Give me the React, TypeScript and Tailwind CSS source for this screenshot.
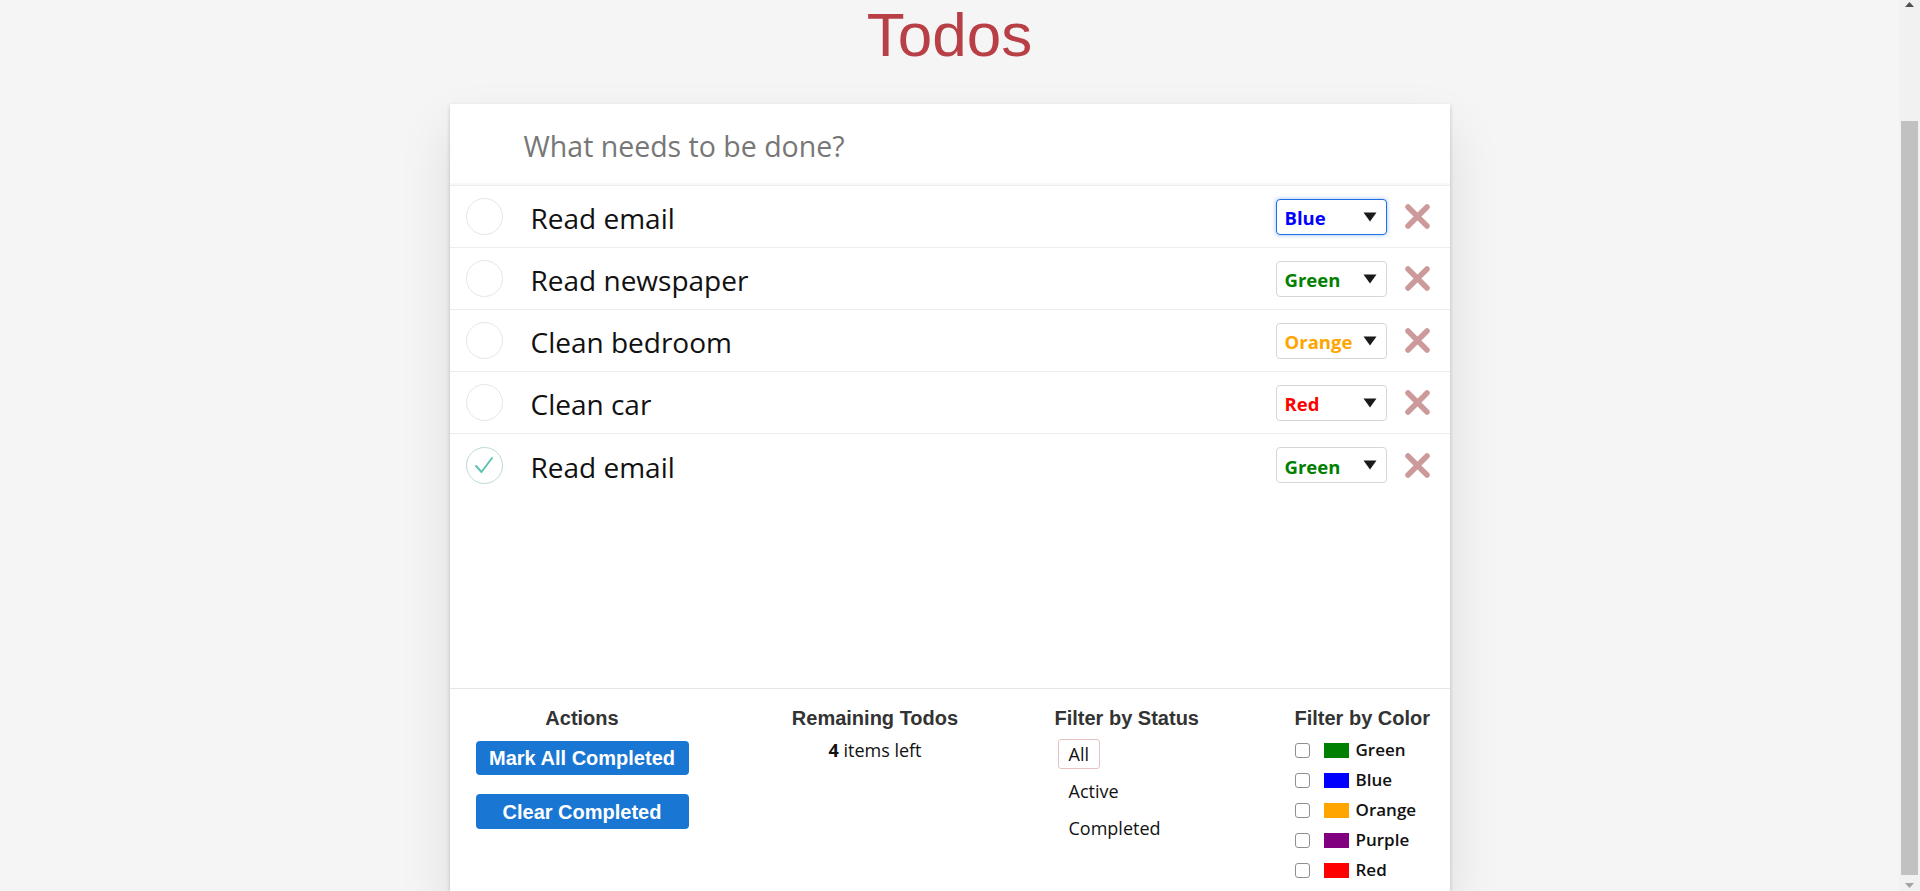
import React from "react";

type Todo = { text: string; color: string; label: string; done: boolean; focused?: boolean };

const todos: Todo[] = [
  { text: "Read email", color: "text-[#0000ff]", label: "Blue", done: false, focused: true },
  { text: "Read newspaper", color: "text-[#008000]", label: "Green", done: false },
  { text: "Clean bedroom", color: "text-[#ffa500]", label: "Orange", done: false },
  { text: "Clean car", color: "text-[#ff0000]", label: "Red", done: false },
  { text: "Read email", color: "text-[#008000]", label: "Green", done: true },
];

const colors = [
  { name: "Green", sw: "bg-[#008000]" },
  { name: "Blue", sw: "bg-[#0000ff]" },
  { name: "Orange", sw: "bg-[#ffa500]" },
  { name: "Purple", sw: "bg-[#800080]" },
  { name: "Red", sw: "bg-[#ff0000]" },
];

const sans = "font-['Open_Sans',sans-serif]";
const arial = "font-['Liberation_Sans',Arial,sans-serif]";

function Circle({ done }: { done: boolean }) {
  return done ? (
    <div className="w-[37px] h-[37px] rounded-full border border-[#bddad5] flex items-center justify-center shrink-0">
      <svg width="22" height="22" viewBox="0 0 22 22">
        <path d="M3 12 L8.5 18 L19 4" fill="none" stroke="#5dc2af" strokeWidth="2" strokeLinecap="round" strokeLinejoin="round" />
      </svg>
    </div>
  ) : (
    <div className="w-[37px] h-[37px] rounded-full border border-[#e6e6e6] shrink-0" />
  );
}

function Row({ t, last }: { t: Todo; last: boolean }) {
  return (
    <div className={`h-[62px] flex items-center pl-[16px] pr-[19px] ${last ? "" : "border-b border-[#ededed]"}`}>
      <Circle done={t.done} />
      <div className={`${sans} ml-[28px] pt-[3px] text-[28px] text-[#111] flex-1 leading-none`}>{t.text}</div>
      <div
        className={`w-[111px] h-[36px] rounded-[4px] bg-white flex items-center justify-between pl-[8px] pr-[9px] ${
          t.focused
            ? "border-[1.5px] border-[#1f6fe5] shadow-[0_0_4px_rgba(31,111,229,0.45)]"
            : "border border-[#d6d6d6]"
        }`}
      >
        <span className={`${sans} pt-[3px] text-[18.5px] font-bold ${t.color}`}>{t.label}</span>
        <svg width="14" height="10" viewBox="0 0 14 10">
          <path d="M0.5 0.5 L13.5 0.5 L7 9.5 Z" fill="#1a1a1a" />
        </svg>
      </div>
      <svg className="ml-[17px]" width="27" height="27" viewBox="0 0 27 27">
        <path d="M4 4 L23 23 M23 4 L4 23" stroke="#cc9a9a" strokeWidth="5.5" strokeLinecap="round" />
      </svg>
    </div>
  );
}

export default function App() {
  return (
    <div className="flex w-[1920px] h-[891px] overflow-hidden">
      <div className="flex-1 bg-[#f5f5f5] flex flex-col items-center">
        <h1 className={`${arial} mt-[4px] text-[62px] h-[61px] leading-[61px] text-[#b83f45] font-normal`}>Todos</h1>
        <div className="mt-[39px] w-[1000px] flex-1 bg-white shadow-[0_2px_4px_rgba(0,0,0,0.2),0_25px_50px_rgba(0,0,0,0.1)] flex flex-col">
          <div className="h-[82px] border-b border-[#ededed] shadow-[inset_0_-2px_1px_rgba(0,0,0,0.03)] flex items-center pl-[74px] pt-[3px]">
            <span className={`${sans} text-[28.5px] text-[#777]`}>What needs to be done?</span>
          </div>
          <div className="h-[502px]">
            {todos.map((t, i) => (
              <Row key={i} t={t} last={i === todos.length - 1} />
            ))}
          </div>
          <div className="flex-1 border-t border-[#e6e6e6] pt-[17px] pl-[26px] flex">
            <div className="w-[213px] flex flex-col items-center">
              <h5 className={`${arial} text-[20px] leading-[24px] font-bold text-[#333]`}>Actions</h5>
              <button className={`${arial} mt-[11px] w-[213px] h-[34px] rounded-[4px] bg-[#1976d2] text-white text-[20px] font-bold`}>
                Mark All Completed
              </button>
              <button className={`${arial} mt-[19px] w-[213px] h-[35px] rounded-[4px] bg-[#1976d2] text-white text-[20px] font-bold`}>
                Clear Completed
              </button>
            </div>
            <div className="ml-[104px] w-[165px] flex flex-col items-center">
              <h5 className={`${arial} text-[20px] leading-[24px] font-bold text-[#333] whitespace-nowrap`}>Remaining Todos</h5>
              <div className={`${sans} mt-[8px] text-[18px] leading-[24px] text-[#111]`}>
                <strong>4</strong> items left
              </div>
            </div>
            <div className="ml-[97px] w-[143px] flex flex-col">
              <h5 className={`${arial} text-[20px] leading-[24px] font-bold text-[#333] whitespace-nowrap`}>Filter by Status</h5>
              <div className="mt-[9px] flex flex-col gap-[7px]">
                {["All", "Active", "Completed"].map((s) => (
                  <div
                    key={s}
                    className={`${sans} h-[30px] self-start ml-[3px] px-[10px] rounded-[3px] flex items-center text-[18px] text-[#111] border ${
                      s === "All" ? "border-[#e6c2c2]" : "border-transparent"
                    }`}
                  >
                    {s}
                  </div>
                ))}
              </div>
            </div>
            <div className="ml-[97px] flex flex-col">
              <h5 className={`${arial} text-[20px] leading-[24px] font-bold text-[#333] whitespace-nowrap`}>Filter by Color</h5>
              <div className="mt-[5px] flex flex-col">
                {colors.map((c) => (
                  <div key={c.name} className="h-[30px] flex items-center">
                    <div className="w-[15px] h-[15px] rounded-[3px] border border-[#8f8f8f] bg-white" />
                    <div className={`ml-[14px] w-[25px] h-[15px] ${c.sw}`} />
                    <span className={`${sans} ml-[7px] text-[17px] font-semibold text-[#111]`}>{c.name}</span>
                  </div>
                ))}
              </div>
            </div>
          </div>
        </div>
      </div>
      <div className="w-[21px] bg-[#f1f1f1] flex flex-col items-center">
        <svg className="mt-[2px]" width="9" height="5" viewBox="0 0 9 5">
          <path d="M0 5 L4.5 0 L9 5 Z" fill="#505050" />
        </svg>
        <div className="mt-[114px] w-[17px] h-[754px] bg-[#c1c1c1]" />
        <svg className="mt-[8px]" width="9" height="5" viewBox="0 0 9 5">
          <path d="M0 0 L9 0 L4.5 5 Z" fill="#a3a3a3" />
        </svg>
      </div>
    </div>
  );
}
